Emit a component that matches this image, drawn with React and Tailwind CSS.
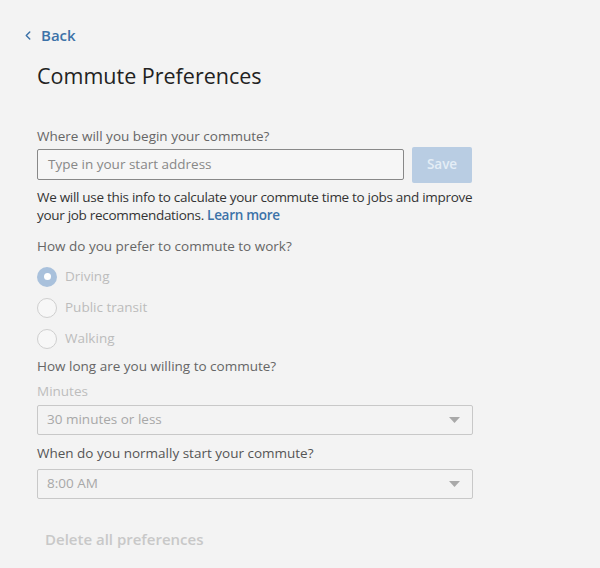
import { ChevronLeft } from "lucide-react";

const modes = ["Driving", "Public transit", "Walking"];

const Select = ({ value }) => (
  <div className="flex h-[30px] w-[436px] items-center justify-between rounded-[2px] border border-[#c8c8c8] pl-[9px] pr-[12px] text-[#a8a8a8]">
    <span>{value}</span>
    <svg width="11" height="6" viewBox="0 0 11 6">
      <path d="M0 0h11L5.5 6z" fill="#a9a9a9" />
    </svg>
  </div>
);

export default function App() {
  return (
    <div className="h-[568px] w-[600px] bg-[#f3f3f3] font-['Open_Sans',sans-serif] text-[13.5px] text-[#333]">
      <div className="flex items-center gap-[6px] pl-[21px] pt-[24px] text-[15px] font-semibold text-[#3c72a8]">
        <ChevronLeft className="h-[15px] w-[14px]" strokeWidth={2.5} />
        <span>Back</span>
      </div>

      <div className="px-[37px]">
        <h1 className="mt-[14px] text-[21.5px] leading-[30px] text-[#222]">Commute Preferences</h1>

        <div className="mt-[35px] leading-[20px] text-[#666]">Where will you begin your commute?</div>
        <div className="mt-[1px] flex items-center gap-[8px]">
          <div className="flex h-[31px] w-[367px] items-center rounded-[2px] border border-[#888] bg-[#f6f6f6] pl-[10px] text-[#888]">
            Type in your start address
          </div>
          <div className="flex h-[36px] w-[60px] items-center justify-center rounded-[2px] bg-[#b9cde3] font-semibold text-[#e4edf6]">
            Save
          </div>
        </div>
        <p className="mt-[5px] leading-[18px] tracking-[-0.3px] text-[#333]">
          <span className="block whitespace-nowrap">We will use this info to calculate your commute time to jobs and improve</span>
          <span className="block whitespace-nowrap">
            your job recommendations. <span className="font-semibold text-[#3c72a8]">Learn more</span>
          </span>
        </p>

        <div className="mt-[12px] leading-[20px] text-[#666]">How do you prefer to commute to work?</div>
        <div className="mt-[11px] flex flex-col gap-[11px]">
          {modes.map((m, i) => (
            <div key={m} className="flex h-[20px] items-center gap-[8px] text-[#bcbcbc]">
              {i === 0 ? (
                <span className="flex h-[20px] w-[20px] items-center justify-center rounded-full bg-[#a9c1dc]">
                  <span className="h-[7px] w-[7px] rounded-full bg-white" />
                </span>
              ) : (
                <span className="h-[20px] w-[20px] rounded-full border-[1.5px] border-[#cfcfcf] bg-[#f7f7f7]" />
              )}
              <span>{m}</span>
            </div>
          ))}
        </div>

        <div className="mt-[7px] leading-[20px] text-[#666]">How long are you willing to commute?</div>
        <div className="mt-[5px] leading-[20px] text-[#bdbdbd]">Minutes</div>
        <div className="mt-[4px]">
          <Select value="30 minutes or less" />
        </div>

        <div className="mt-[8px] leading-[20px] text-[#555]">When do you normally start your commute?</div>
        <div className="mt-[6px]">
          <Select value="8:00 AM" />
        </div>

        <div className="mt-[29px] pl-[8px] text-[15px] font-semibold text-[#c8c8c8]">Delete all preferences</div>
      </div>
    </div>
  );
}
